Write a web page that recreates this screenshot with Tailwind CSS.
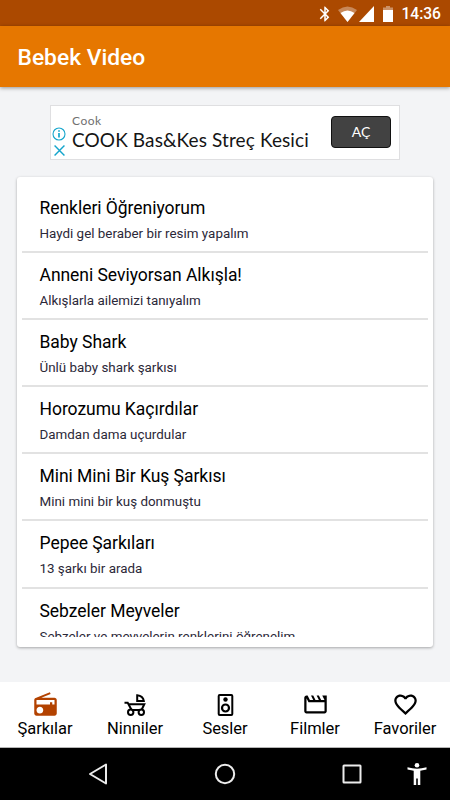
<!DOCTYPE html>
<html lang="tr">
<head>
  <meta charset="UTF-8" />
  <meta name="viewport" content="width=device-width, initial-scale=1.0"/>
  <title>Bebek Video</title>
  <script src="https://cdn.jsdelivr.net/npm/@tailwindcss/browser@4"></script>
</head>
<body class="bg-[#f3f4f6] font-[Roboto,sans-serif] text-black">
  <div class="flex flex-col w-[450px] h-[800px] overflow-hidden">

    <!-- Status bar -->
    <div class="h-[26px] shrink-0 bg-[#ab4900] text-white flex items-center justify-end pr-[9px] pt-px">
      <svg class="w-[18px] h-[18px] mr-[4px]" viewBox="0 0 24 24" fill="currentColor"><path d="M17.71 7.71L12 2h-1v7.59L6.41 5 5 6.41 10.59 12 5 17.59 6.41 19 11 14.41V22h1l5.71-5.71-4.3-4.29 4.3-4.29zM13 5.83l1.88 1.88L13 9.59V5.83zm1.88 10.46L13 18.17v-3.76l1.88 1.88z"/></svg>
      <svg class="w-[19px] h-[16px] mr-[2px]" viewBox="0 0 19 16"><path d="M0 4Q9.500 -3 19 4L9.500 16z" fill="#fff" fill-opacity=".35"/><path d="M2.500 7Q9.500 2 16.500 7L9.500 16z" fill="#fff"/></svg>
      <svg class="w-[15px] h-[16px] mr-[9px]" viewBox="0 0 16 16" preserveAspectRatio="none"><path d="M16 0v16H0z" fill="#fff"/></svg>
      <svg class="w-[10px] h-[16px] mr-[8px]" viewBox="0 0 10 16"><path d="M3 0h4v1.500h3V5H0V1.500h3z" fill="#fff" fill-opacity=".4"/><path d="M0 4h10v12H0z" fill="#fff"/></svg>
      <span class="pt-[2px] text-[15.6px] leading-none font-medium">14:36</span>
    </div>

    <!-- App bar -->
    <header class="relative h-[61px] shrink-0 bg-[#e67700] shadow-[0_1px_4px_rgba(0,0,0,0.4)] flex items-center pl-[17.5px] pt-[4px]">
      <h1 class="text-white text-[22.8px] font-medium">Bebek Video</h1>
    </header>

    <!-- Ad banner -->
    <div class="mt-[18px] ml-[50px] w-[350px] h-[55px] shrink-0 bg-white border border-[#dfdfe1] flex">
      <div class="w-[21px] flex flex-col items-center pt-[21px] gap-[4px] shrink-0">
        <svg class="w-[14px] h-[14px] -ml-[5px]" viewBox="0 0 14 14" fill="none" stroke="#14a5cc" stroke-width="1.1"><circle cx="7" cy="7" r="6"/><path d="M7 6v4.500M7 3.300v1.500" stroke-width="1.7"/></svg>
        <svg class="w-[11px] h-[11px] -ml-[5px]" viewBox="0 0 10 10" fill="none" stroke="#14a5cc" stroke-width="1.300"><path d="M.5.5l9 9M9.500.5l-9 9"/></svg>
      </div>
      <div class="flex-1 pt-[8px] whitespace-nowrap">
        <p class="text-[12px] leading-[14px] text-[#707070] font-[Lato,sans-serif] tracking-[0.5px]">Cook</p>
        <p class="text-[19px] leading-[24px] text-[#151515] font-[Lato,sans-serif] tracking-[0.11px]">COOK Bas&amp;Kes Streç Kesici</p>
      </div>
      <button class="mt-[10px] mr-[8px] w-[60px] h-[32px] pb-[2px] rounded-[4px] bg-[#424242] border border-[#111] text-white text-[14px] font-[Lato,sans-serif]">AÇ</button>
    </div>

    <!-- Video list -->
    <div class="mt-[17px] ml-[17px] w-[416px] h-[470px] shrink-0 bg-white rounded-[3px] shadow-[0_1px_3px_rgba(0,0,0,0.32)] px-[5px] pb-[10px] pt-[9px]">
      <ul id="video-list" class="h-[451px] overflow-hidden"></ul>
    </div>

    <!-- Bottom tabs -->
    <nav class="mt-[35px] h-[66px] shrink-0 bg-white border-b border-[#b5b5b5] grid grid-cols-5 text-[16.5px] tracking-[-0.03px] leading-[22px]">
      <a class="flex flex-col items-center pt-[9px]">
        <svg class="w-[27px] h-[27px]" viewBox="0 0 24 24" fill="#b34200"><path d="M3.240 6.150C2.510 6.430 2 7.170 2 8v12c0 1.100.89 2 2 2h16c1.110 0 2-.9 2-2V8c0-1.110-.89-2-2-2H8.300l8.260-3.340L15.880 1 3.240 6.150zM7 20c-1.660 0-3-1.340-3-3s1.340-3 3-3 3 1.340 3 3-1.340 3-3 3zm13-8h-2v-2h-2v2H4V8h16v4z"/></svg>
        <span>Şarkılar</span>
      </a>
      <a class="flex flex-col items-center pt-[9px]">
        <svg class="w-[27px] h-[27px]" viewBox="0 0 27 27" fill="none" stroke="#000" stroke-width="2"><path d="M2.500 11.800h3.200l3.900 7.200M6 13.200h16.300l-3 6.300M9 19h10"/><path d="M15.200 10V4.300c3.600.4 6.200 2.800 6.600 5.700z"/><circle cx="8.700" cy="21.300" r="2.700" fill="#fff"/><circle cx="19.300" cy="21.300" r="2.700" fill="#fff"/></svg>
        <span>Ninniler</span>
      </a>
      <a class="flex flex-col items-center pt-[9px]">
        <svg class="w-[27px] h-[27px]" viewBox="0 0 27 27" fill="none" stroke="#000" stroke-width="2"><rect x="6.700" y="4" width="13.600" height="20" rx="1"/><circle cx="13.500" cy="17" r="3.500" stroke-width="2.200"/><circle cx="13.500" cy="8.500" r="2.200" fill="#000" stroke="none"/></svg>
        <span>Sesler</span>
      </a>
      <a class="flex flex-col items-center pt-[9px]">
        <svg class="w-[27px] h-[27px]" viewBox="0 0 24 24"><path d="M18 4l2 4h-3l-2-4h-2l2 4h-3l-2-4H8l2 4H7L5 4H4c-1.100 0-1.990.9-1.990 2L2 18c0 1.100.9 2 2 2h16c1.100 0 2-.9 2-2V4h-4zM4 18V6.470L5.760 10H20v8H4z"/></svg>
        <span>Filmler</span>
      </a>
      <a class="flex flex-col items-center pt-[9px]">
        <svg class="w-[27px] h-[27px]" viewBox="0 0 24 24"><path d="M16.500 3c-1.740 0-3.410.81-4.500 2.090C10.910 3.810 9.240 3 7.500 3 4.420 3 2 5.420 2 8.500c0 3.780 3.400 6.860 8.550 11.540L12 21.350l1.450-1.320C18.600 15.360 22 12.280 22 8.500 22 5.420 19.580 3 16.500 3zm-4.400 15.550l-.1.100-.1-.1C7.140 14.240 4 11.390 4 8.500 4 6.500 5.500 5 7.500 5c1.540 0 3.040.99 3.570 2.360h1.870C13.460 5.990 14.960 5 16.500 5c2 0 3.500 1.500 3.500 3.500 0 2.890-3.140 5.740-7.900 10.050z"/></svg>
        <span>Favoriler</span>
      </a>
    </nav>

    <!-- System navigation -->
    <div class="flex-1 bg-black flex items-center pl-[88px] text-[#ececec]">
      <svg class="w-[20px] h-[22px]" viewBox="0 0 20 22" fill="none" stroke="currentColor" stroke-width="2" stroke-linejoin="round"><path d="M18 1.500v19L2 11z"/></svg>
      <svg class="w-[22px] h-[22px] ml-[106px]" viewBox="0 0 22 22" fill="none" stroke="currentColor" stroke-width="2"><circle cx="11" cy="11" r="9.200"/></svg>
      <svg class="w-[20px] h-[20px] ml-[106px]" viewBox="0 0 20 20" fill="none" stroke="currentColor" stroke-width="2"><rect x="1.500" y="1.500" width="17" height="17" rx=".5"/></svg>
      <!-- accessibility figure -->
      <svg class="w-[20px] h-[22px] ml-[45px]" viewBox="0 0 20 22" fill="#fff"><circle cx="10" cy="2.300" r="2.300"/><path d="M.5 4.300Q10 7 19.500 4.300V6.400L13.300 7.700V22h-2.500v-6.500H9.200V22H6.700V7.700L.5 6.400z"/></svg>
    </div>
  </div>

  <script>
    const videos = [
      { title: "Renkleri Öğreniyorum", desc: "Haydi gel beraber bir resim yapalım" },
      { title: "Anneni Seviyorsan Alkışla!", desc: "Alkışlarla ailemizi tanıyalım" },
      { title: "Baby Shark", desc: "Ünlü baby shark şarkısı" },
      { title: "Horozumu Kaçırdılar", desc: "Damdan dama uçurdular" },
      { title: "Mini Mini Bir Kuş Şarkısı", desc: "Mini mini bir kuş donmuştu" },
      { title: "Pepee Şarkıları", desc: "13 şarkı bir arada" },
      { title: "Sebzeler Meyveler", desc: "Sebzeler ve meyvelerin renklerini öğrenelim" },
    ];

    document.getElementById("video-list").innerHTML = videos.map(video => `
      <li class="h-[67.1px] border-b-2 border-[#e2e2e2] pl-[17.5px] pt-[11px]">
        <h2 class="text-[17.5px] tracking-[-0.04px] leading-[22px]">${video.title}</h2>
        <p class="mt-[5px] text-[13.4px] leading-[19px] text-[#2b2838]">${video.desc}</p>
      </li>
    `).join("");
  </script>
</body>
</html>
